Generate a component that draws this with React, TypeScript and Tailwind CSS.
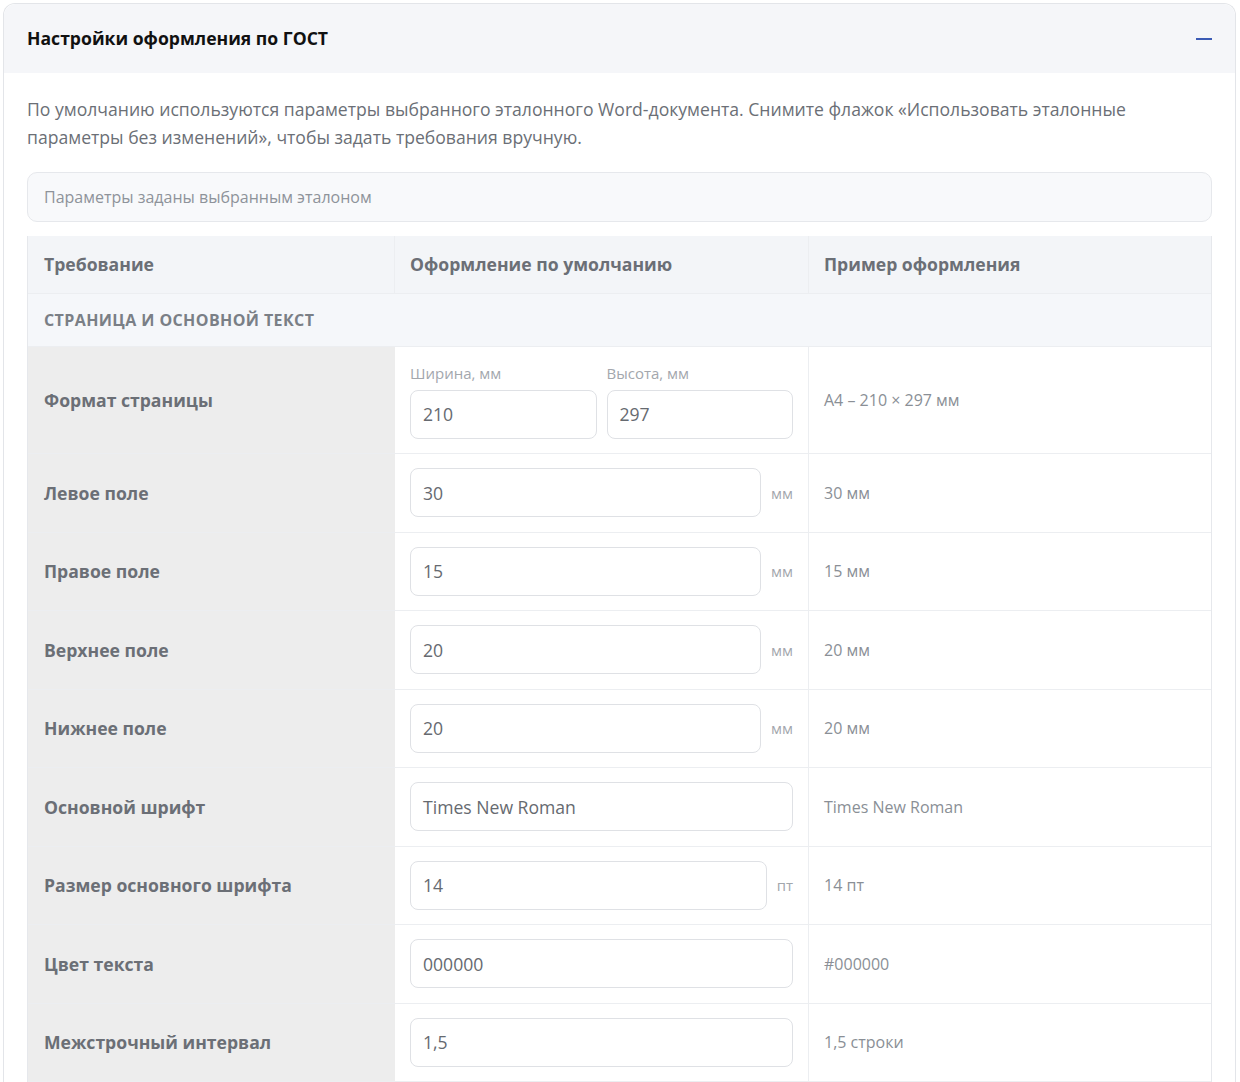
import React from "react";

const font = { fontFamily: '"Open Sans", "Noto Sans", sans-serif' };

type Row = {
  label: string;
  value: string;
  unit?: string;
  example: string;
};

const rows: Row[] = [
  { label: "Левое поле", value: "30", unit: "мм", example: "30 мм" },
  { label: "Правое поле", value: "15", unit: "мм", example: "15 мм" },
  { label: "Верхнее поле", value: "20", unit: "мм", example: "20 мм" },
  { label: "Нижнее поле", value: "20", unit: "мм", example: "20 мм" },
  { label: "Основной шрифт", value: "Times New Roman", example: "Times New Roman" },
  { label: "Размер основного шрифта", value: "14", unit: "пт", example: "14 пт" },
  { label: "Цвет текста", value: "000000", example: "#000000" },
  { label: "Межстрочный интервал", value: "1,5", example: "1,5 строки" },
];

function Field({ value }: { value: string }) {
  return (
    <div className="flex h-[49px] min-w-0 flex-1 items-center rounded-[8px] border border-[#dfe1e5] bg-white px-[12px] text-[17.6px] text-[#666a70]">
      {value}
    </div>
  );
}

export default function App() {
  return (
    <div className="min-h-[1082px] bg-white pl-[3px] pr-[4px] pt-[3px]" style={font}>
      <div className="rounded-t-[12px] border border-b-0 border-[#e3e5e9] bg-white">
        {/* Header */}
        <div className="flex h-[69px] items-center justify-between rounded-t-[12px] bg-[#f5f6f9] pl-[23px] pr-[23px]">
          <h2 className="text-[17.6px] font-bold text-[#111111]">Настройки оформления по ГОСТ</h2>
          <div className="h-[2px] w-[16px] bg-[#3b5bb5]" />
        </div>

        <div className="px-[23px] pt-[22px]">
          <p className="text-[17.6px] leading-[28px] text-[#6b6f76]">
            По умолчанию используются параметры выбранного эталонного Word-документа. Снимите флажок «Использовать эталонные параметры без изменений», чтобы задать требования вручную.
          </p>

          <div className="mt-[21px] flex h-[50px] items-center rounded-[10px] border border-[#e6e8ec] bg-[#f8f9fb] px-[16px] text-[16px] text-[#8e939a]">
            Параметры заданы выбранным эталоном
          </div>

          <div className="mt-[14px] border-x border-[#e6e8ec]">
            {/* Table header */}
            <div className="grid grid-cols-[367px_414px_1fr] border-b border-[#eceef1] bg-[#f3f5f8] text-[17.6px] font-bold text-[#6b6f76]">
              <div className="flex h-[57px] items-center border-r border-[#eceef1] px-[16px]">Требование</div>
              <div className="flex h-[57px] items-center border-r border-[#eceef1] px-[15px]">Оформление по умолчанию</div>
              <div className="flex h-[57px] items-center px-[15px]">Пример оформления</div>
            </div>

            {/* Section */}
            <div className="flex h-[53px] items-center border-b border-[#eceef1] bg-[#f5f7fa] px-[16px] text-[16px] font-bold uppercase tracking-[0.4px] text-[#7a7f86]">
              Страница и основной текст
            </div>

            {/* Page format */}
            <div className="grid grid-cols-[367px_414px_1fr] border-b border-[#eceef1]">
              <div className="flex items-center bg-[#ededed] px-[16px] text-[17.6px] font-bold text-[#6b6f76]">
                Формат страницы
              </div>
              <div className="border-r border-[#eceef1] px-[15px] pb-[14px] pt-[15px]">
                <div className="flex gap-[10px]">
                  <div className="flex flex-1 flex-col">
                    <span className="mb-[6px] text-[15px] leading-[22px] text-[#a3a7ad]">Ширина, мм</span>
                    <div className="flex">
                      <Field value="210" />
                    </div>
                  </div>
                  <div className="flex flex-1 flex-col">
                    <span className="mb-[6px] text-[15px] leading-[22px] text-[#a3a7ad]">Высота, мм</span>
                    <div className="flex">
                      <Field value="297" />
                    </div>
                  </div>
                </div>
              </div>
              <div className="flex items-center px-[15px] text-[16px] text-[#8a8f96]">A4 – 210 × 297 мм</div>
            </div>

            {rows.map((r) => (
              <div key={r.label} className="grid grid-cols-[367px_414px_1fr] border-b border-[#eceef1]">
                <div className="flex items-center bg-[#ededed] px-[16px] text-[17.6px] font-bold text-[#6b6f76]">
                  {r.label}
                </div>
                <div className="flex items-center gap-[10px] border-r border-[#eceef1] px-[15px] py-[14.25px]">
                  <Field value={r.value} />
                  {r.unit && <span className="text-[15px] text-[#a3a7ad]">{r.unit}</span>}
                </div>
                <div className="flex items-center px-[15px] text-[16px] text-[#8a8f96]">{r.example}</div>
              </div>
            ))}
          </div>
        </div>
      </div>
    </div>
  );
}
